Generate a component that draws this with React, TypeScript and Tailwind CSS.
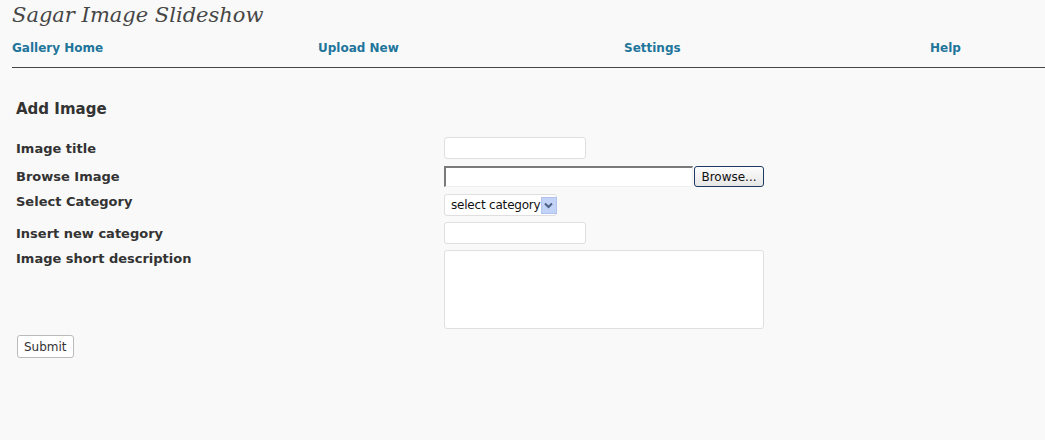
import React from "react";

export default function App() {
  const v = { fontFamily: "Verdana, 'DejaVu Sans', sans-serif" };
  const tahoma = { fontFamily: "Tahoma, 'DejaVu Sans', sans-serif" };
  const labels = "w-[428px] shrink-0 text-[13px] font-bold text-[#333]";
  return (
    <div className="w-[1045px] h-[440px] bg-[#f9f9f9] overflow-hidden" style={v}>
      <div className="pl-[12px]">
        <h1
          className="text-[21px] italic text-[#464646] leading-[30px]"
          style={{ fontFamily: "Georgia, 'DejaVu Serif', serif" }}
        >
          Sagar Image Slideshow
        </h1>
        <div className="grid grid-cols-[306px_306px_306px_auto] pt-[9px] pb-[10px] border-b border-[#464646] text-[12px] font-bold text-[#21759b] leading-[18px]">
          <a>Gallery Home</a>
          <a>Upload New</a>
          <a>Settings</a>
          <a>Help</a>
        </div>
      </div>
      <div className="pl-[16px] pt-[30px]">
        <h2 className="text-[15px] font-bold text-[#333] leading-[22px]">Add Image</h2>
        <div className="flex flex-col mt-[17px]">
          <div className="flex items-start">
            <div className={labels + " pt-[2px]"}>Image title</div>
            <input className="block w-[142px] h-[22px] bg-white border border-[#dfdfdf] rounded-[3px]" />
          </div>
          <div className="flex items-start mt-[7px]">
            <div className={labels + " pt-[1px]"}>Browse Image</div>
            <div className="flex items-center">
              <div className="w-[249px] h-[21px] bg-white border-t-2 border-l-2 border-[#7a7a7a] border-b border-r border-b-[#f0f0f0] border-r-[#f0f0f0]" />
              <button
                className="ml-[1px] w-[70px] h-[21px] bg-gradient-to-b from-[#fdfdfd] to-[#e6e6e6] border border-[#1e3a63] rounded-[3px] text-[12px] text-[#111] leading-none"
                style={tahoma}
              >
                Browse...
              </button>
            </div>
          </div>
          <div className="flex items-start mt-[7px]">
            <div className={labels + " -mt-[2px]"}>Select Category</div>
            <div className="flex items-center w-[113px] h-[22px] bg-white border border-[#dfdfdf] rounded-[3px] pl-[6px] pr-[2px]">
              <span className="text-[12px] text-[#111] flex-1 leading-none whitespace-nowrap tracking-[-0.2px]" style={tahoma}>
                select category
              </span>
              <span className="w-[16px] h-[17px] shrink-0 bg-[#c3d3f7] border border-[#b1c3ee] flex items-center justify-center">
                <svg width="9" height="7" viewBox="0 0 9 7">
                  <path d="M1 1.5 L4.5 5 L8 1.5" stroke="#4d6185" strokeWidth="2" fill="none" />
                </svg>
              </span>
            </div>
          </div>
          <div className="flex items-start mt-[6px]">
            <div className={labels + " pt-[2px]"}>Insert new category</div>
            <input className="block w-[142px] h-[22px] bg-white border border-[#dfdfdf] rounded-[3px]" />
          </div>
          <div className="flex items-start mt-[6px]">
            <div className={labels + " -mt-[1px]"}>Image short description</div>
            <textarea className="block w-[320px] h-[79px] bg-white border border-[#dfdfdf] rounded-[3px] resize-none" />
          </div>
        </div>
        <button
          className="block mt-[6px] ml-[1px] h-[23px] px-[6px] bg-white border border-[#bbb] rounded-[3px] text-[12px] text-[#333] leading-none"
          style={tahoma}
        >
          Submit
        </button>
      </div>
    </div>
  );
}
